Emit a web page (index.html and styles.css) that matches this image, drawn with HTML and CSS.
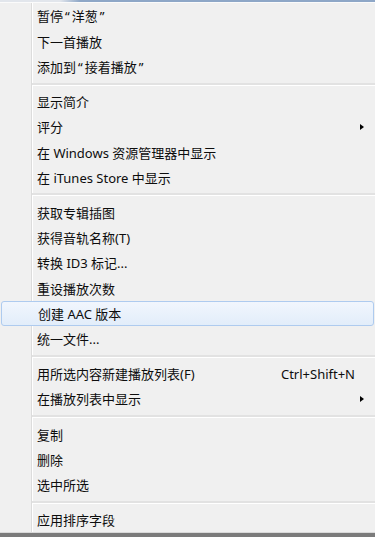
FILE: index.html
```html
<!DOCTYPE html>
<html>
<head>
  <meta charset="UTF-8">
  <title>Context menu</title>
  <link rel="stylesheet" href="styles.css">
</head>
<body>
  <div class="menu">
    <div class="top-edge"></div>

    <div class="menu-list">
      <div class="item"><span class="label">暂停<span class="quote">“</span>洋葱<span class="quote">”</span></span></div>
      <div class="item"><span class="label">下一首播放</span></div>
      <div class="item"><span class="label">添加到<span class="quote">“</span>接着播放<span class="quote">”</span></span></div>

      <div class="separator"></div>

      <div class="item"><span class="label">显示简介</span></div>
      <div class="item has-sub"><span class="label">评分</span><span class="arrow"></span></div>
      <div class="item"><span class="label">在 Windows 资源管理器中显示</span></div>
      <div class="item"><span class="label">在 iTunes Store 中显示</span></div>

      <div class="separator"></div>

      <div class="item"><span class="label">获取专辑插图</span></div>
      <div class="item"><span class="label">获得音轨名称(T)</span></div>
      <div class="item"><span class="label">转换 ID3 标记...</span></div>
      <div class="item"><span class="label">重设播放次数</span></div>
      <div class="item active"><span class="label">创建 AAC 版本</span></div>
      <div class="item"><span class="label">统一文件...</span></div>

      <div class="separator"></div>

      <div class="item"><span class="label">用所选内容新建播放列表(F)</span><span class="shortcut">Ctrl+Shift+N</span></div>
      <div class="item has-sub"><span class="label">在播放列表中显示</span><span class="arrow"></span></div>

      <div class="separator"></div>

      <div class="item"><span class="label">复制</span></div>
      <div class="item"><span class="label">删除</span></div>
      <div class="item"><span class="label">选中所选</span></div>

      <div class="separator"></div>

      <div class="item"><span class="label">应用排序字段</span></div>
    </div>

    <div class="bottom-edge"></div>
  </div>
</body>
</html>
```

FILE: styles.css
```css
body {
  margin: 0;
  background-color: #f0f0f0;
  font-family: "Noto Sans", "Noto Sans CJK SC", sans-serif;
  font-size: 13px;
  color: #0d0d0d;
}
.menu {
  width: 375px;
  height: 537px;
  display: flex;
  flex-direction: column;
  overflow: hidden;
}
.top-edge {
  height: 2px;
  background: linear-gradient(to right, #e2e6ec 0, #e2e6ec 60px, #8ea7c7 80px, #8ea7c7 100%);
  border-bottom: 1px solid #fbfbfb;
  flex-shrink: 0;
}
.menu-list {
  flex: 1;
  padding-top: 0.4px;
  background: linear-gradient(to right, transparent 31px, #dcdcdc 31px, #dcdcdc 32px, #ffffff 32px, #ffffff 33px, transparent 33px);
}
.item {
  height: 25.2px;
  display: flex;
  align-items: center;
  padding-left: 37px;
  box-sizing: border-box;
  white-space: nowrap;
}
.label {
  flex: 1;
}
.quote {
  margin: 0 2px;
}
.shortcut {
  margin-right: 20px;
}
.arrow {
  width: 0;
  height: 0;
  border-top: 3.5px solid transparent;
  border-bottom: 3.5px solid transparent;
  border-left: 4px solid #000;
  margin-right: 11px;
}
.item.active {
  margin: 0 1px;
  padding-left: 36px;
  border: 1px solid #aecbef;
  border-radius: 3px;
  background: linear-gradient(to bottom, #f1f6fd, #e2edfa);
}
.separator {
  height: 10.1px;
  margin-left: 32px;
  display: flex;
  flex-direction: column;
  justify-content: center;
}
.separator::before {
  content: "";
  height: 2px;
  background-color: #e2e2e2;
  border-bottom: 1px solid #ffffff;
}
.bottom-edge {
  height: 4px;
  border-top: 1px solid #d9d9d9;
  background-color: #7b7b7b;
  flex-shrink: 0;
}
```
